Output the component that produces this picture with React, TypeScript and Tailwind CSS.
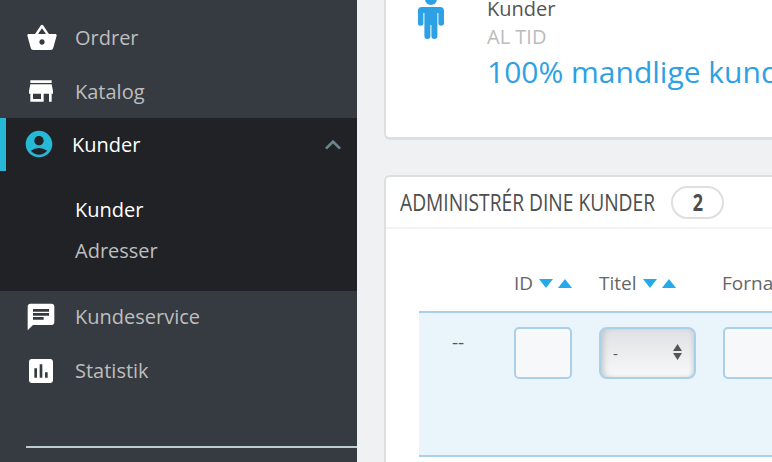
import type { ReactNode } from "react";
import {
  MdAccountCircle,
  MdAssessment,
  MdChat,
  MdExpandLess,
  MdShoppingBasket,
  MdStore,
} from "react-icons/md";

const SortArrows = () => (
  <span className="flex items-center gap-[5px] ml-[6px]">
    <svg width="14" height="9" viewBox="0 0 14 9" className="fill-[#25a9e8]">
      <path d="M0 0h14L7 9z" />
    </svg>
    <svg width="14" height="9" viewBox="0 0 14 9" className="fill-[#25a9e8]">
      <path d="M0 9h14L7 0z" />
    </svg>
  </span>
);

const PersonIcon = () => (
  <svg width="26" height="46" viewBox="0 0 26 46" className="fill-[#2ea1e4] mt-[-6px] shrink-0">
    <circle cx="13" cy="5" r="6" />
    <path d="M4 13h18a4 4 0 0 1 4 4v12a2.800 2.800 0 0 1-5.600 0V19h-1v23a3 3 0 0 1-6 0V31h-1v11a3 3 0 0 1-6 0V19h-1v10a2.800 2.800 0 0 1-5.600 0V17a4 4 0 0 1 4-4z" />
  </svg>
);

const NavItem = ({ icon, label }: { icon: ReactNode; label: string }) => (
  <div className="flex items-center h-[54px] pl-[26px]">
    <span className="w-[32px] flex justify-center text-white">{icon}</span>
    <span className="ml-[17px] text-[20px] text-[#bebebe]">{label}</span>
  </div>
);

export default function App() {
  return (
    <div className="flex w-[772px] h-[462px] overflow-hidden bg-[#eff1f2] font-['Open_Sans',sans-serif]">
      <aside className="w-[357px] shrink-0 h-full bg-[#363a41] pt-[11px]">
        <NavItem icon={<MdShoppingBasket size={36} />} label="Ordrer" />
        <NavItem icon={<MdStore size={32} className="mt-[-2px] ml-[-2px]" />} label="Katalog" />
        <div className="bg-[#202226] h-[173px] mt-[-1px] mb-[-1px]">
          <div className="flex items-center h-[53px] border-l-[6px] border-[#25b9d7] pl-[17px] pr-[8px]">
            <span className="w-[32px] flex justify-center text-[#25b9d7]">
              <MdAccountCircle size={32} className="mt-[-2px]" />
            </span>
            <span className="ml-[17px] text-[20px] font-medium text-white">Kunder</span>
            <MdExpandLess size={32} className="ml-auto text-[#6c868e]" />
          </div>
          <div className="pl-[75px] pt-[24px] flex flex-col gap-[12px] text-[20px] leading-[29px]">
            <span className="font-medium text-white">Kunder</span>
            <span className="text-[#bebebe]">Adresser</span>
          </div>
        </div>
        <NavItem icon={<MdChat size={32} className="mt-[-1px] ml-[-2px]" />} label="Kundeservice" />
        <NavItem icon={<MdAssessment size={32} className="mt-[-1px] ml-[-2px]" />} label="Statistik" />
        <div className="ml-[26px] mt-[48px] h-[2px] bg-[#bbcdd2]" />
      </aside>

      <main className="flex-1 min-w-0 pl-[27px] flex flex-col gap-[35px]">
        <section className="h-[140px] shrink-0 bg-white rounded-bl-[6px] border-l-2 border-b-[3px] border-[#dcdfe0] flex pl-[32px]">
          <PersonIcon />
          <div className="ml-[43px] whitespace-nowrap">
            <div className="text-[20px] leading-[20px] text-[#555] mt-[-1px]">Kunder</div>
            <div className="text-[20px] leading-[26px] text-[#bbb] mt-[5px]">AL TID</div>
            <div className="text-[30px] leading-[44px] text-[#2ea1e4]">100% mandlige kunder</div>
          </div>
        </section>

        <section className="flex-1 bg-white rounded-tl-[6px] border-l-2 border-t-2 border-[#dcdfe0]">
          <div className="flex items-center h-[52px] border-b-2 border-[#f2f2f2] pl-[14px] whitespace-nowrap">
            <h2 className="text-[24px] font-medium text-[#4d4d4d] origin-left scale-x-[0.8] w-[255px]">
              ADMINISTRÉR DINE KUNDER
            </h2>
            <span className="ml-[16px] w-[53px] h-[33px] rounded-full border-2 border-[#dfdfdf] flex items-center justify-center text-[24px] font-bold text-[#4d4d4d]">
              <span className="scale-x-[0.75]">2</span>
            </span>
          </div>

          <div className="pl-[33px]">
            <div className="flex items-center h-[82px] pt-[26px] pl-[95px] text-[19px] text-[#666] whitespace-nowrap">
              <span className="w-[85px] shrink-0 flex items-center">
                ID
                <SortArrows />
              </span>
              <span className="w-[123px] shrink-0 flex items-center">
                Titel
                <SortArrows />
              </span>
              <span className="shrink-0">Fornavn</span>
            </div>
            <div className="h-[146px] bg-[#eaf4fb] border-y-2 border-[#a9d0e8] flex pl-[33px] whitespace-nowrap">
              <span className="w-[62px] shrink-0 mt-[15px] text-[19px] leading-[29px] text-[#555]">--</span>
              <div className="mt-[14px] w-[58px] h-[52px] shrink-0 rounded-[5px] border-2 border-[#a9d0e8] bg-[#f6f8fa]" />
              <div className="relative mt-[14px] ml-[27px] w-[97px] h-[52px] shrink-0 rounded-[8px] border-2 border-[#a9d0e8] bg-gradient-to-b from-[#dfe1e4] to-[#f7f8f9] shadow-[inset_5px_0_6px_-3px_#bbc0c4,inset_-3px_0_4px_-2px_#c9cdd0] flex items-center pl-[12px] text-[15px] text-[#555]">
                -
                <svg width="9" height="16" viewBox="0 0 9 16" className="absolute right-[12px] top-[15px] fill-[#555]">
                  <path d="M4.500 0L9 7H0zM0 9h9l-4.500 7z" />
                </svg>
              </div>
              <div className="mt-[14px] ml-[27px] w-[80px] h-[52px] shrink-0 rounded-[5px] border-2 border-[#a9d0e8] bg-[#f6f8fa]" />
            </div>
          </div>
        </section>
      </main>
    </div>
  );
}
